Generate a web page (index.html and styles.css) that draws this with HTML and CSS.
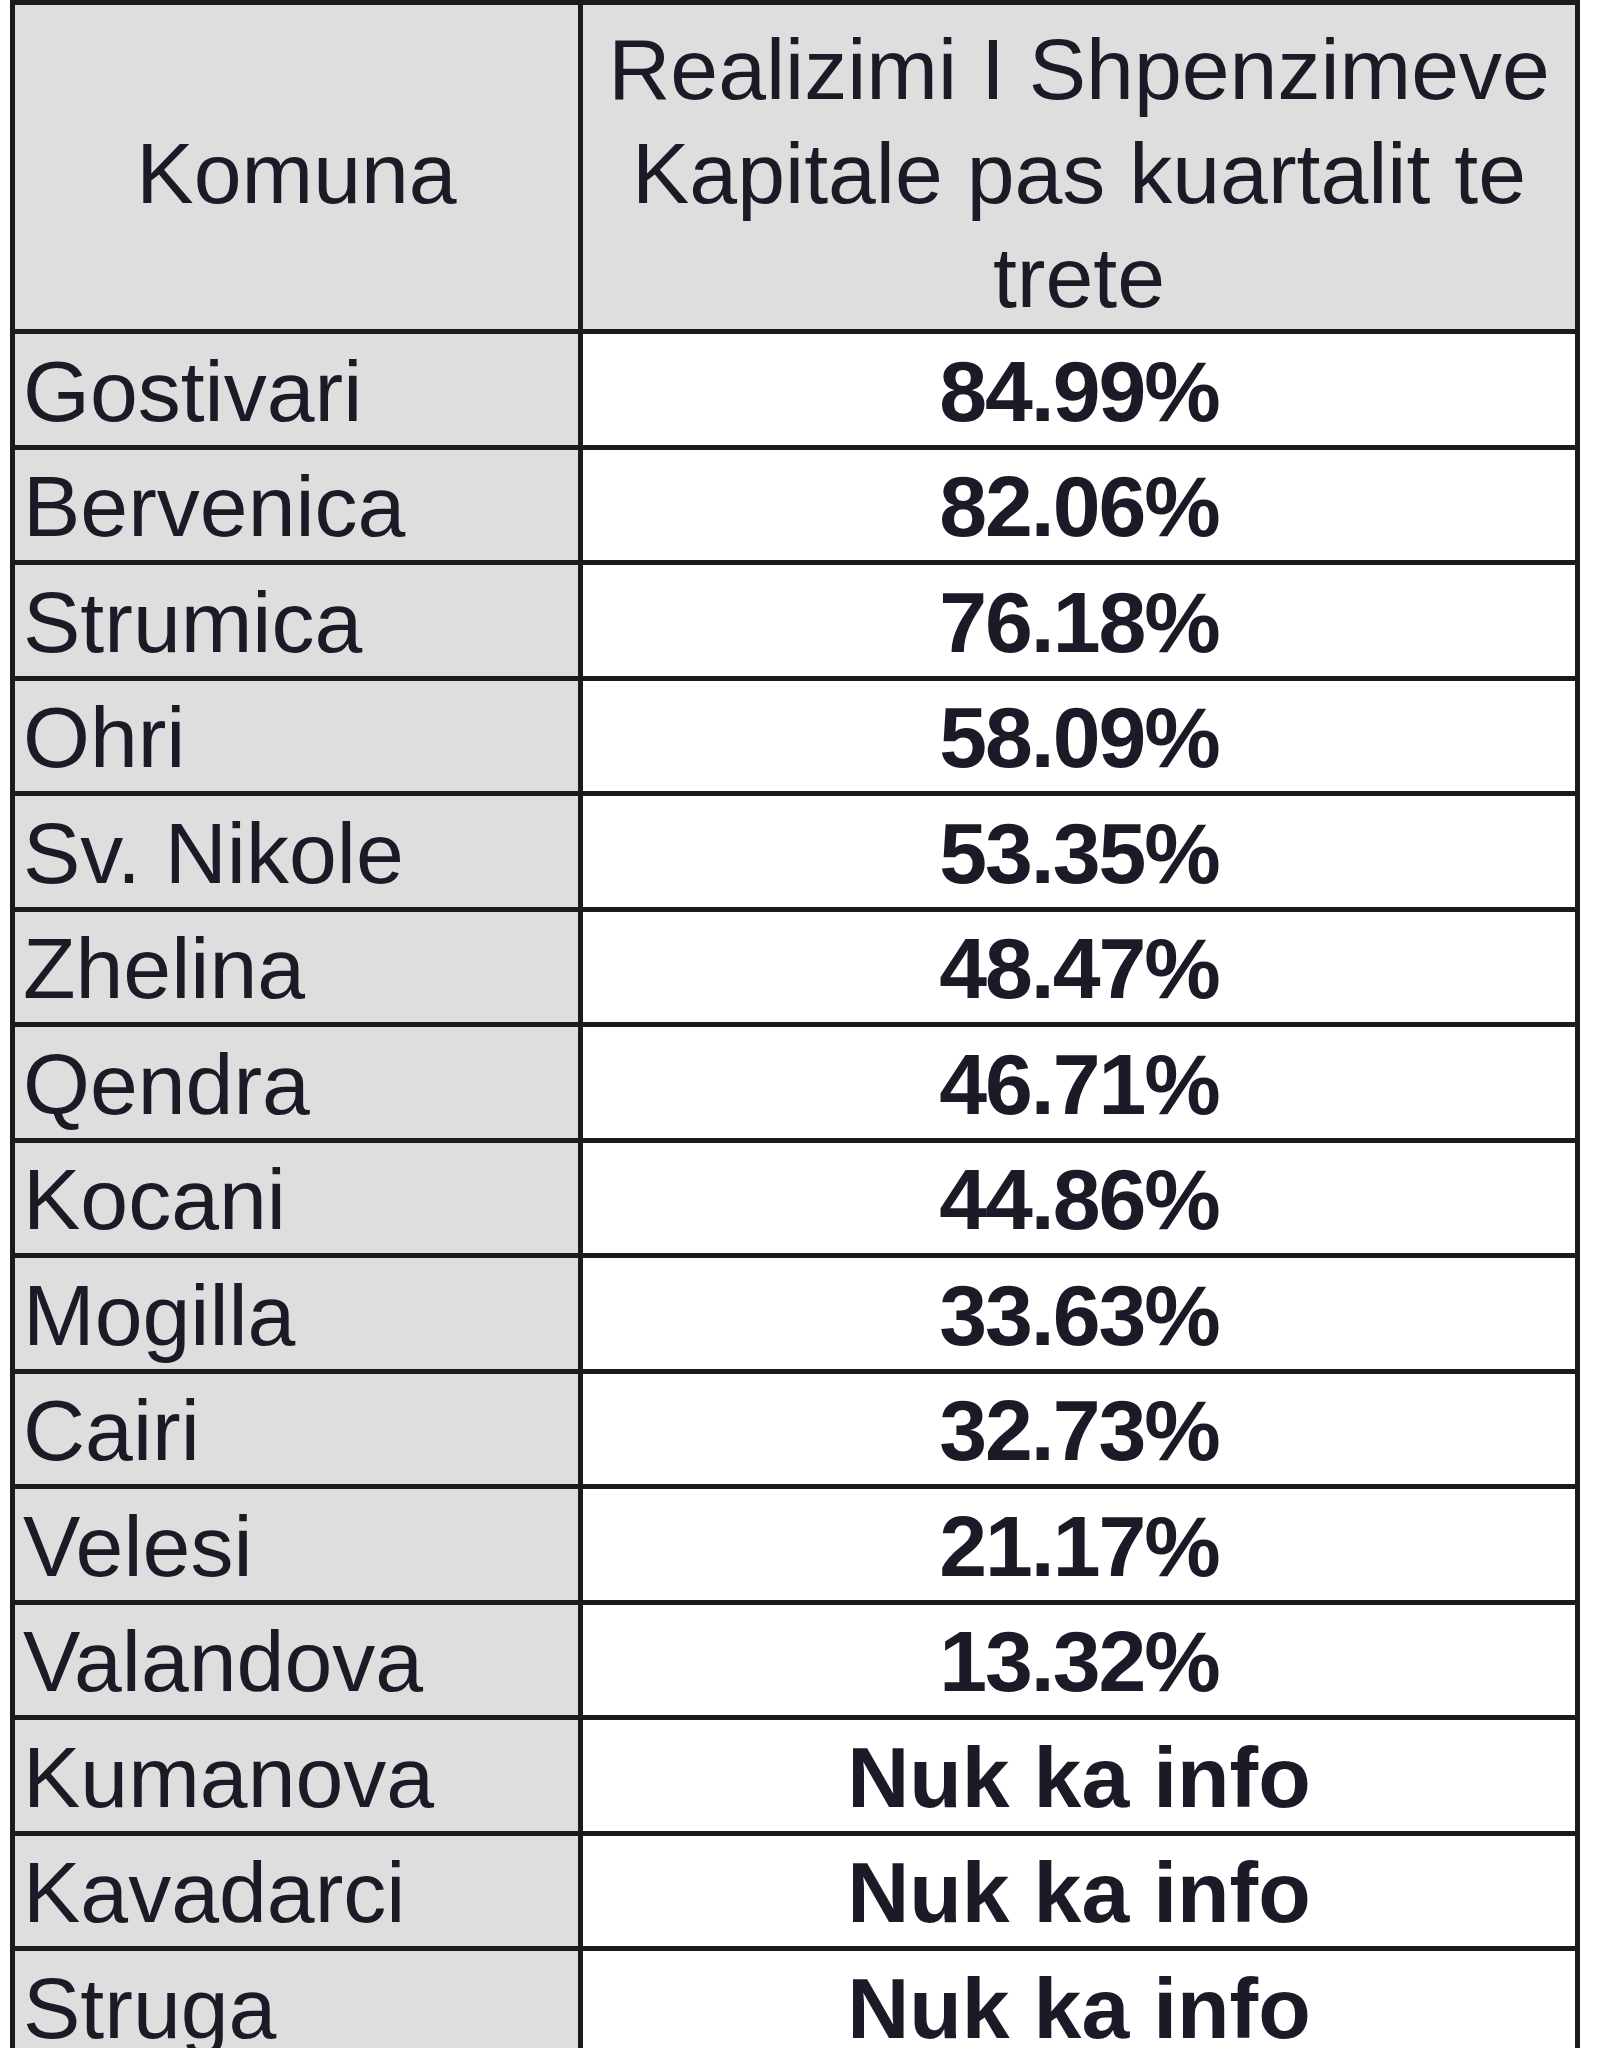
FILE: index.html
```html
<!DOCTYPE html>
<html lang="sq">
<head>
<meta charset="utf-8">
<title>Realizimi I Shpenzimeve Kapitale</title>
<link rel="stylesheet" href="styles.css">
</head>
<body>
<table class="tbl">
  <colgroup>
    <col class="col-name">
    <col class="col-val">
  </colgroup>
  <thead>
    <tr>
      <th class="h-name">Komuna</th>
      <th class="h-val">Realizimi I Shpenzimeve Kapitale pas kuartalit te trete</th>
    </tr>
  </thead>
  <tbody>
    <tr><td class="name">Gostivari</td><td class="val">84.99%</td></tr>
    <tr><td class="name">Bervenica</td><td class="val">82.06%</td></tr>
    <tr><td class="name">Strumica</td><td class="val">76.18%</td></tr>
    <tr><td class="name">Ohri</td><td class="val">58.09%</td></tr>
    <tr><td class="name">Sv. Nikole</td><td class="val">53.35%</td></tr>
    <tr><td class="name">Zhelina</td><td class="val">48.47%</td></tr>
    <tr><td class="name">Qendra</td><td class="val">46.71%</td></tr>
    <tr><td class="name">Kocani</td><td class="val">44.86%</td></tr>
    <tr><td class="name">Mogilla</td><td class="val">33.63%</td></tr>
    <tr><td class="name">Cairi</td><td class="val">32.73%</td></tr>
    <tr><td class="name">Velesi</td><td class="val">21.17%</td></tr>
    <tr><td class="name">Valandova</td><td class="val">13.32%</td></tr>
    <tr><td class="name">Kumanova</td><td class="val na">Nuk ka info</td></tr>
    <tr><td class="name">Kavadarci</td><td class="val na">Nuk ka info</td></tr>
    <tr><td class="name">Struga</td><td class="val na">Nuk ka info</td></tr>
  </tbody>
</table>
</body>
</html>
```
FILE: styles.css
```css
html, body {
  margin: 0;
  padding: 0;
  background: #ffffff;
}
body {
  padding: 0 0 0 10px;
  font-family: "Liberation Sans", Arial, sans-serif;
  color: #1c1a26;
}
.tbl {
  border-collapse: collapse;
  width: 1565px;
  table-layout: fixed;
}
.col-name { width: 568px; }
.col-val { width: 997px; }
.tbl th, .tbl td {
  border: 5px solid #1b1b1b;
  padding: 0;
}
.tbl th {
  background: #dedede;
  font-weight: normal;
  font-size: 86px;
  line-height: 104px;
  text-align: center;
  vertical-align: middle;
  height: 312px;
  padding: 12px 8px 0;
}
.tbl td {
  height: 106.5px;
  font-size: 86px;
  line-height: 100px;
  vertical-align: bottom;
  padding-bottom: 4px;
}
.name {
  background: #dedede;
  text-align: left;
  padding-left: 8px !important;
}
.val {
  background: #ffffff;
  text-align: center;
  font-weight: bold;
  letter-spacing: -2px;
}
.val.na {
  letter-spacing: 0;
}
```
